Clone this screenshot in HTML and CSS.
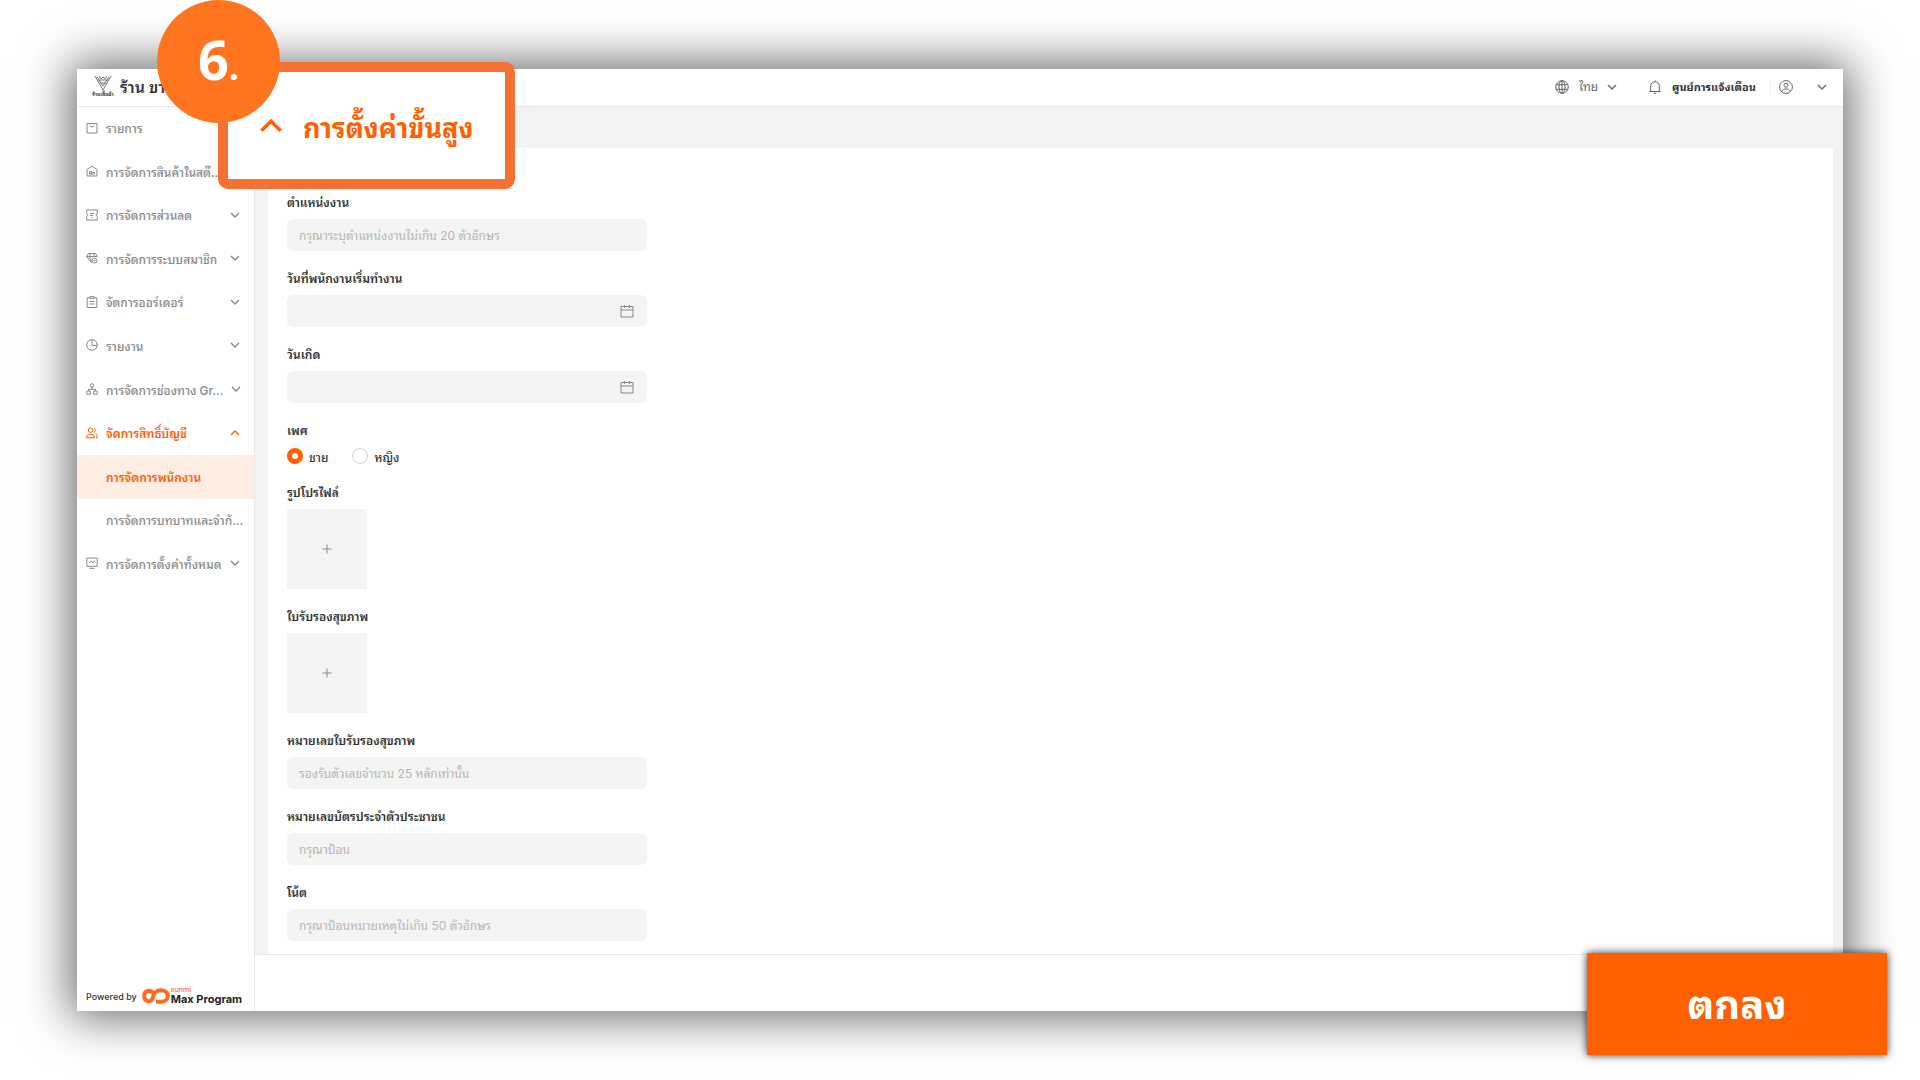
FILE: index.html
```html
<!DOCTYPE html>
<html lang="th">
<head>
    <meta charset="UTF-8">
    <meta name="viewport" content="width=device-width, initial-scale=1.0">
    <title>การจัดการพนักงาน - Max Program</title>
    <link rel="stylesheet" href="styles.css">
</head>
<body>
    <!-- Shared icons -->
    <svg class="sprite" aria-hidden="true">
        <symbol id="chevron" viewBox="0 0 10 6"><path d="M1 1l4 4 4-4"/></symbol>
        <symbol id="calendar" viewBox="0 0 14 14"><path d="M1 2.500h12v10.500H1zM1 6h12M4.500 1v3M9.500 1v3"/></symbol>
    </svg>

    <div class="window">
        <header class="topbar">
            <svg class="shop-logo" viewBox="0 0 22 24">
                <path d="M3 1l8 14 8-14M5 2l6 9 6-9M7 1l2 3 2-2 2 2 2-3M6 5h10M8 8h6"/>
                <text x="11" y="21" text-anchor="middle">ร้านเสื้อผ้า</text>
            </svg>
            <h1 class="shop-name">ร้าน ขาย</h1>
            <div class="top-actions">
                <svg class="icon globe" viewBox="0 0 14 14"><circle cx="7" cy="7" r="6.300"/><ellipse cx="7" cy="7" rx="3" ry="6.300"/><path d="M7 .7v12.600M1.200 4.700h11.600M1.200 9.300h11.600"/></svg>
                <select class="lang" aria-label="ภาษา"><option>ไทย</option></select>
                <svg class="chevron"><use href="#chevron"/></svg>
                <a href="#" class="notice">
                    <svg class="icon" viewBox="0 0 14 14"><path d="M1.200 11.500h11.600M2.700 11.500V6a4.300 4.300 0 0 1 8.600 0v5.500M7 1.700V.4M5.800 13.300h2.400"/></svg>
                    <span>ศูนย์การแจ้งเตือน</span>
                </a>
                <button class="user" aria-label="บัญชีผู้ใช้">
                    <svg class="icon" viewBox="0 0 14 14"><circle cx="7" cy="7" r="6.400"/><circle cx="7" cy="5.300" r="2"/><path d="M2.800 11.500c.8-3.500 7.600-3.500 8.400 0"/></svg>
                    <svg class="chevron"><use href="#chevron"/></svg>
                </button>
            </div>
        </header>

        <aside class="sidebar">
            <nav class="menu">
                <a href="#"><svg class="icon" viewBox="0 0 12 12"><path d="M1 1.500h10V11H1zM4 3.500c0 2 4 2 4 0"/></svg><span>รายการ</span></a>
                <a href="#"><svg class="icon" viewBox="0 0 12 12"><path d="M1 4.500L6 1l5 3.500V11H1zM3.500 9V6.500h2V9zM3.500 9h5V7.500h-3"/></svg><span>การจัดการสินค้าในสต๊...</span><svg class="chevron"><use href="#chevron"/></svg></a>
                <a href="#"><svg class="icon" viewBox="0 0 12 12"><path d="M.7 1h10.600v3.500c-1.500.5-1.500 2.500 0 3V11H.7V7.500c1.500-.5 1.500-2.500 0-3zM4 4.500h4M4 6.500h3M5 8.500h1"/></svg><span>การจัดการส่วนลด</span><svg class="chevron"><use href="#chevron"/></svg></a>
                <a href="#"><svg class="icon" viewBox="0 0 12 12"><path d="M5.500 10.500L.7 4.500 2.500 1.500h7l1.800 3M.7 4.500h10.600M3.500 4.500l2 6M4 1.500v3M8 1.500v3"/><circle cx="8.500" cy="8.500" r="2.500"/><path d="M7.500 8.500h2"/></svg><span>การจัดการระบบสมาชิก</span><svg class="chevron"><use href="#chevron"/></svg></a>
                <a href="#"><svg class="icon" viewBox="0 0 12 12"><path d="M4 1.700H1.200v9.800h9.600V1.700H8M4 .6h4v2H4zM3.500 5.500h5M3.500 8h5"/></svg><span>จัดการออร์เดอร์</span><svg class="chevron"><use href="#chevron"/></svg></a>
                <a href="#"><svg class="icon" viewBox="0 0 12 12"><circle cx="6" cy="6" r="5.300"/><path d="M6 .7V6.500h5.200"/></svg><span>รายงาน</span><svg class="chevron"><use href="#chevron"/></svg></a>
                <a href="#"><svg class="icon" viewBox="0 0 12 12"><circle cx="6" cy="2.400" r="1.700"/><path d="M6 4v2.500M2.500 8V6.300h7V8M.8 8h3.600v3.200H.8zM7.600 8h3.600v3.200H7.600z"/></svg><span>การจัดการช่องทาง Gr...</span><svg class="chevron"><use href="#chevron"/></svg></a>
                <a href="#" class="open"><svg class="icon" viewBox="0 0 12 12"><circle cx="4.500" cy="3.200" r="2.300"/><path d="M.7 10.800V9c0-2 7.600-2 7.600 0v1.800zM8 1.500c2.200 0 2.200 3.400 0 3.400M9.500 7c1.500.3 1.800 1 1.800 3.800H10"/></svg><span>จัดการสิทธิ์บัญชี</span><svg class="chevron up"><use href="#chevron"/></svg></a>
                <a href="#" class="sub current"><span>การจัดการพนักงาน</span></a>
                <a href="#" class="sub"><span>การจัดการบทบาทและจำกั...</span></a>
                <a href="#"><svg class="icon" viewBox="0 0 12 12"><path d="M.8 1h10.400v8.300H.8zM3.500 11.300h5M3 6l2-2 1.500 1.700L9 3.500"/></svg><span>การจัดการตั้งค่าทั้งหมด</span><svg class="chevron"><use href="#chevron"/></svg></a>
            </nav>
            <div class="powered">
                <span>Powered by</span>
                <svg class="brand-mark" viewBox="0 0 28 16"><path d="M11 5.500C9 1.500 2.200 2 2.200 8.200c0 5.800 7 6.500 8.300 2.500 1-3 1.500-8.500 8-8.500 4 0 7.300 2 7.300 5.800s-3 5.800-6.500 5.800H14"/></svg>
                <div class="brand"><small>sunmi</small><b>Max Program</b></div>
            </div>
        </aside>

        <main class="content">
            <form class="panel" id="employee">
                <div class="field">
                    <label for="position">ตำแหน่งงาน</label>
                    <input type="text" id="position" placeholder="กรุณาระบุตำแหน่งงานไม่เกิน 20 ตัวอักษร">
                </div>
                <div class="field">
                    <label for="start-date">วันที่พนักงานเริ่มทำงาน</label>
                    <div class="date"><input type="text" id="start-date"><svg class="icon"><use href="#calendar"/></svg></div>
                </div>
                <div class="field">
                    <label for="birthday">วันเกิด</label>
                    <div class="date"><input type="text" id="birthday"><svg class="icon"><use href="#calendar"/></svg></div>
                </div>
                <fieldset class="field">
                    <legend>เพศ</legend>
                    <div class="radios">
                        <label><input type="radio" name="gender" checked>ชาย</label>
                        <label><input type="radio" name="gender">หญิง</label>
                    </div>
                </fieldset>
                <div class="field">
                    <label for="photo">รูปโปรไฟล์</label>
                    <button type="button" class="upload" id="photo"><svg viewBox="0 0 10 10"><path d="M5 .5v9M.5 5h9"/></svg></button>
                </div>
                <div class="field">
                    <label for="cert">ใบรับรองสุขภาพ</label>
                    <button type="button" class="upload" id="cert"><svg viewBox="0 0 10 10"><path d="M5 .5v9M.5 5h9"/></svg></button>
                </div>
                <div class="field">
                    <label for="cert-no">หมายเลขใบรับรองสุขภาพ</label>
                    <input type="text" id="cert-no" placeholder="รองรับตัวเลขจำนวน 25 หลักเท่านั้น">
                </div>
                <div class="field">
                    <label for="id-no">หมายเลขบัตรประจำตัวประชาชน</label>
                    <input type="text" id="id-no" placeholder="กรุณาป้อน">
                </div>
                <div class="field">
                    <label for="note">โน้ต</label>
                    <input type="text" id="note" placeholder="กรุณาป้อนหมายเหตุไม่เกิน 50 ตัวอักษร">
                </div>
            </form>
            <div class="actions"></div>
        </main>
    </div>

    <!-- Step callout -->
    <button class="callout">
        <svg class="chevron up" viewBox="0 0 10 6"><path d="M1 1l4 4 4-4"/></svg>
        <span>การตั้งค่าขั้นสูง</span>
    </button>
    <div class="step"><p>6<span>.</span></p></div>
    <button class="submit" form="employee">ตกลง</button>
</body>
</html>
```
FILE: styles.css
```css
* { margin: 0; padding: 0; box-sizing: border-box; }
body { position: relative; display: flex; min-height: 100vh; padding: 69px 77px; background: #fff; color: #333; font-family: Inter, "Noto Sans Thai Looped", "Noto Sans Thai", "Noto Sans", sans-serif; font-size: 12px; }
button, input, select { font: inherit; color: inherit; border: none; background: none; }
button { cursor: pointer; }
a { color: inherit; text-decoration: none; }
svg { flex: none; fill: none; stroke: currentColor; }
.sprite { position: absolute; width: 0; height: 0; }
.icon { width: 12px; height: 12px; }
.chevron { width: 10px; height: 6px; stroke-width: 1.4; }
.chevron.up { transform: rotate(180deg); }

.window { flex: 1; display: grid; grid-template: 38px 1fr / 178px 1fr; background: #fff; box-shadow: 0 0 44px 6px rgba(0, 0, 0, 0.6); }

.topbar { grid-column: 1 / -1; display: flex; align-items: center; padding: 0 16px 2px 15px; border-bottom: 1px solid #e8e8e8; }
.shop-logo { width: 22px; height: 24px; margin-right: 6px; stroke-width: 1; color: #777; }
.shop-logo text { font-size: 5px; font-weight: bold; fill: #333; stroke: none; }
.shop-name { font-size: 16px; line-height: 24px; font-weight: 600; white-space: nowrap; }
.top-actions { display: flex; align-items: center; margin-left: auto; color: #666; }
.top-actions .icon { width: 14px; height: 14px; }
.lang { appearance: none; width: 20px; margin: 0 8px 0 10px; }
.notice { display: flex; align-items: center; gap: 10px; margin-left: 31px; padding-right: 14px; border-right: 1px solid #eee; line-height: 14px; }
.notice span { color: #333; font-size: 11px; font-weight: bold; }
.user { display: flex; align-items: center; gap: 24px; margin-left: 8px; }

.sidebar { display: flex; flex-direction: column; justify-content: space-between; border-right: 1px solid #e8e8e8; }
.menu { display: grid; grid-template-columns: 100%; grid-auto-rows: 1fr; height: 479px; color: #888; }
.menu a { display: flex; align-items: center; gap: 8px; padding: 0 14px 2px 9px; font-weight: 500; white-space: nowrap; }
.menu .chevron { margin-left: auto; }
.menu .sub { padding-left: 29px; }
.menu .open, .menu .current { color: #ff6000; font-weight: 600; }
.menu .current { background: #ffede4; }
.powered { display: flex; align-items: center; gap: 5px; padding: 0 9px 6px; font-size: 9px; font-weight: 500; white-space: nowrap; }
.brand-mark { width: 28px; height: 16px; stroke: #ff6a1f; stroke-width: 4; }
.brand { display: flex; flex-direction: column; margin-left: -4px; color: #222; }
.brand small { font-size: 7px; line-height: 6px; color: #ff6a1f; }
.brand b { font-size: 11px; line-height: 12px; font-weight: 700; }

.content { display: flex; flex-direction: column; background: #f3f3f3; }
.panel { flex: 1; margin: 41px 10px 0 13px; padding: 43px 19px 0; background: #fff; }
.field { width: 360px; margin-bottom: 16px; border: none; }
.field:last-child { margin-bottom: 12px; }
.field > label, .field legend { display: block; height: 24px; margin-bottom: 4px; line-height: 24px; font-weight: 600; }
.field input[type="text"] { display: block; width: 100%; height: 32px; padding: 0 12px; border-radius: 6px; background: #f4f4f4; }
.field input::placeholder { color: #b5b5b5; }
.date { position: relative; }
.date .icon { position: absolute; right: 13px; top: 9px; width: 14px; height: 14px; color: #888; }
.radios { display: flex; gap: 24px; height: 18px; }
.radios label { display: flex; align-items: center; gap: 6px; font-weight: 500; }
.radios input { appearance: none; width: 16px; height: 16px; border: 1px solid #d5d5d5; border-radius: 50%; }
.radios input:checked { border: 5px solid #ff6000; }
.upload { display: flex; align-items: center; justify-content: center; width: 80px; height: 80px; background: #f4f4f4; color: #888; }
.upload svg { width: 10px; height: 10px; }
.actions { height: 57px; border-top: 1px solid #e8e8e8; background: #fff; }

.callout { position: absolute; left: 218px; top: 62px; display: flex; align-items: center; gap: 20px; width: 297px; height: 127px; padding: 0 0 0 31px; border: 10px solid #f57033; border-radius: 10px; background: #fff; color: #ff6000; font-size: 27px; font-weight: bold; white-space: nowrap; }
.callout .chevron { width: 24px; height: 16px; }
.step { position: absolute; left: 157px; top: 0; display: flex; justify-content: center; width: 123px; height: 123px; border-radius: 50%; background: #ff751f; color: #fff; font: bold 54px/118px "Open Sans", sans-serif; }
.step span { font-size: 36px; line-height: 1; }
.submit { position: absolute; right: 33px; bottom: 25px; width: 300px; height: 102px; padding-bottom: 6px; background: #ff6000; box-shadow: 0 0 8px rgba(0, 0, 0, 0.8); color: #fff; font-size: 40px; font-weight: bold; }
```
